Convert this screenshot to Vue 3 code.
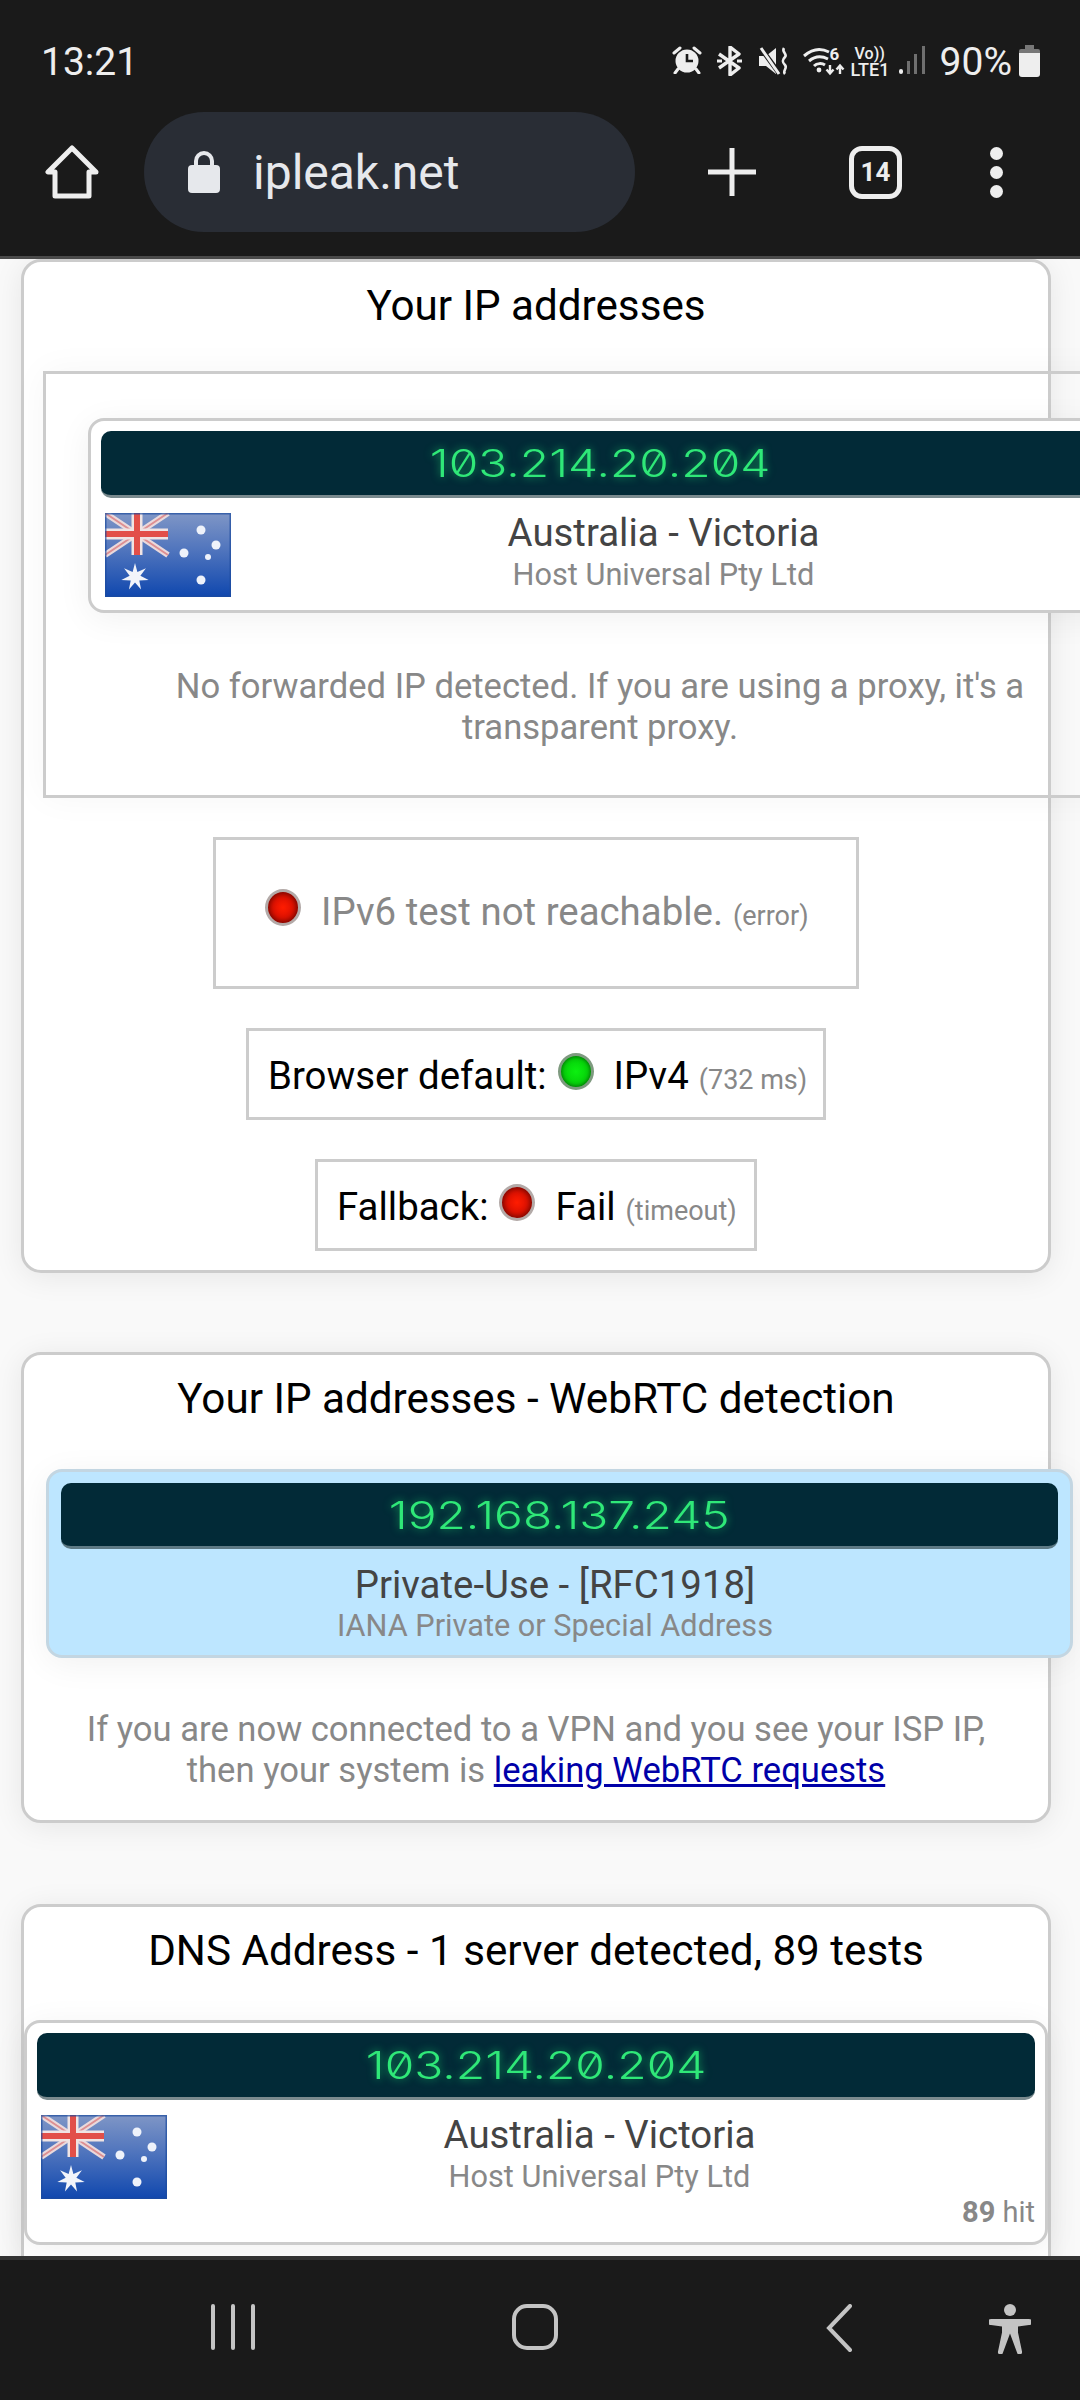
<script setup>
const statusChecks = [
  { cls: 'check-v6', label: '', dot: 'red', value: 'IPv6 test not reachable.', note: '(error)' },
  { cls: 'check-default', label: 'Browser default:', dot: 'green', value: 'IPv4', note: '(732 ms)' },
  { cls: 'check-fallback', label: 'Fallback:', dot: 'red', value: 'Fail', note: '(timeout)' }
]

// seven-pointed Commonwealth star of the flag, centred in the lower hoist
const starPoints = Array.from({ length: 14 }, (_, i) => {
  const r = i % 2 === 0 ? 14 : 5.5
  const a = (i * Math.PI) / 7 - Math.PI / 2
  return `${(30 + r * Math.cos(a)).toFixed(2)},${(64 + r * Math.sin(a)).toFixed(2)}`
}).join(' ')
</script>

<template>
  <div class="screen">
    <header class="top">
      <div class="status">
        <span class="time">13:21</span>
        <div class="status-right">
          <svg class="ic alarm" viewBox="0 0 30 28" width="30" height="28">
            <circle cx="15" cy="15" r="11.5" fill="#eee" />
            <path d="M15 8v7h6" fill="none" stroke="#1a1a1a" stroke-width="2.6" />
            <path d="M2 7l6-5M28 7l-6-5M6 23l-3 4M24 23l3 4" stroke="#eee" stroke-width="3" stroke-linecap="round" />
          </svg>
          <svg class="ic bt" viewBox="0 0 27 30" width="27" height="30">
            <path d="M3 8l20 14-9 7V1l9 7L3 22" fill="none" stroke="#eee" stroke-width="3.4" stroke-linejoin="round" />
            <path d="M1 15h5M21 15h5" stroke="#eee" stroke-width="3" />
          </svg>
          <svg class="ic mute" viewBox="0 0 31 30" width="31" height="30">
            <path d="M0 10h7l10-8v26l-10-8H0z" fill="#eee" />
            <path d="M1 1l19 26" stroke="#1a1a1a" stroke-width="5" />
            <path d="M2 2l18 26" stroke="#eee" stroke-width="3" />
            <path d="M25 2c-3 4 4 6 1 9s-3 5 0 8-3 6 0 9" fill="none" stroke="#eee" stroke-width="2.6" />
          </svg>
          <svg class="ic wifi" viewBox="0 0 44 30" width="44" height="30">
            <path d="M1 10c8-7 17-8 25-4M6 15c6-5 13-5 19-2M11 20c3-3 8-3 11-1" fill="none" stroke="#eee" stroke-width="3" />
            <circle cx="16" cy="24" r="2.4" fill="#eee" />
            <path d="M27 19v8m-3.500-3.500l3.500 4 3.500-4M37 28v-8m-3.500 3.500l3.500-4 3.500 4" fill="none" stroke="#eee" stroke-width="2.400" />
          </svg>
          <span class="six">6</span>
          <div class="volte"><span class="vo">Vo))</span><span class="lte">LTE1</span></div>
          <svg class="ic signal" viewBox="0 0 27 30" width="27" height="30">
            <rect x="0" y="23" width="4" height="5" rx="2" fill="#eee" />
            <rect x="8" y="15" width="3" height="13" fill="#6f6f6f" />
            <rect x="15" y="8" width="3" height="20" fill="#6f6f6f" />
            <rect x="23" y="0" width="3" height="28" fill="#6f6f6f" />
          </svg>
          <span class="pct">90%</span>
          <svg class="ic battery" viewBox="0 0 21 32" width="21" height="32">
            <path d="M6 0h9v4h4a2 2 0 0 1 2 2v5H0V6a2 2 0 0 1 2-2h4z" fill="#777" />
            <path d="M0 8h21v21a3 3 0 0 1-3 3H3a3 3 0 0 1-3-3z" fill="#eee" />
          </svg>
        </div>
      </div>
      <div class="toolbar">
        <svg class="home" viewBox="0 0 54 54" width="54" height="54">
          <path d="M27 3L3 27h7v24h34V27h7z" fill="none" stroke="#eee" stroke-width="5" stroke-linejoin="round" />
        </svg>
        <div class="omnibox">
          <svg class="lock" viewBox="0 0 32 42" width="32" height="42">
            <path d="M8 16V10a8 8 0 0 1 16 0v6" fill="none" stroke="#e6e8ec" stroke-width="4" />
            <rect x="0" y="14" width="32" height="28" rx="4" fill="#e6e8ec" />
          </svg>
          <span class="url">ipleak.net</span>
        </div>
        <svg class="plus" viewBox="0 0 48 48" width="48" height="48">
          <path d="M24 0v48M0 24h48" stroke="#eee" stroke-width="5" stroke-linecap="round" />
        </svg>
        <div class="tabs">14</div>
        <div class="menu"><i></i><i></i><i></i></div>
      </div>
    </header>

    <main class="page">
      <section class="card first">
        <h2 class="title">Your IP addresses</h2>
        <div class="ip-box">
          <div class="ip-card">
            <div class="ip-bar"><span class="ip">103.214.20.204</span></div>
            <div class="geo">
              <svg class="flag" viewBox="0 0 126 84" width="126" height="84">
                <defs>
                  <linearGradient id="flagBlue" x1="0" y1="0" x2="0" y2="1">
                    <stop offset="0" stop-color="#7f96c6" />
                    <stop offset="0.45" stop-color="#4f74bd" />
                    <stop offset="1" stop-color="#0f47ae" />
                  </linearGradient>
                  <filter id="soft" x="-5%" y="-5%" width="110%" height="110%">
                    <feGaussianBlur stdDeviation="0.7" />
                  </filter>
                </defs>
                <g id="auflag">
                  <rect width="126" height="84" fill="url(#flagBlue)" />
                  <g filter="url(#soft)">
                    <path d="M0 0l63 42M63 0L0 42" stroke="#e9d9dc" stroke-width="6" />
                    <path d="M0 0l63 42M63 0L0 42" stroke="#dd8f92" stroke-width="2" />
                    <path d="M32 0v42M0 21h63" stroke="#efe4e4" stroke-width="11" />
                    <path d="M32 0v42M0 21h63" stroke="#e2504a" stroke-width="6" />
                    <polygon :points="starPoints" fill="#f2f4fa" />
                    <g fill="#eef2fa">
                      <circle cx="96" cy="17" r="4.500" />
                      <circle cx="111" cy="32" r="4.500" />
                      <circle cx="79" cy="40" r="4.500" />
                      <circle cx="103" cy="44" r="3" />
                      <circle cx="96" cy="67" r="4.500" />
                    </g>
                  </g>
                  <rect x="0.750" y="0.750" width="124.500" height="82.500" fill="none" stroke="#1d4c9e" stroke-width="1.500" opacity="0.700" />
                </g>
              </svg>
              <div class="geo-text">
                <div class="place">Australia - Victoria</div>
                <div class="org">Host Universal Pty Ltd</div>
              </div>
            </div>
          </div>
          <p class="muted forward">No forwarded IP detected. If you are using a proxy, it's a<br />transparent proxy.</p>
        </div>

        <div class="checks">
          <div v-for="c in statusChecks" :key="c.cls" class="check" :class="c.cls">
            <span v-if="c.label" class="label">{{ c.label }}</span>
            <span class="dot" :class="c.dot"></span>
            <span class="value">{{ c.value }}</span>
            <span class="note">{{ c.note }}</span>
          </div>
        </div>
      </section>

      <section class="card webrtc">
        <h2 class="title">Your IP addresses - WebRTC detection</h2>
        <div class="ip-card private">
          <div class="ip-bar"><span class="ip">192.168.137.245</span></div>
          <div class="geo-text">
            <div class="place">Private-Use - [RFC1918]</div>
            <div class="org">IANA Private or Special Address</div>
          </div>
        </div>
        <p class="muted leak">If you are now connected to a VPN and you see your ISP IP,<br />then your system is <a href="#leak" class="link">leaking WebRTC requests</a></p>
      </section>

      <section class="card dns">
        <h2 class="title">DNS Address - 1 server detected, 89 tests</h2>
        <div class="ip-card dns-card">
          <div class="ip-bar"><span class="ip">103.214.20.204</span></div>
          <div class="geo">
            <svg class="flag" viewBox="0 0 126 84" width="126" height="84"><use href="#auflag" /></svg>
            <div class="geo-text">
              <div class="place">Australia - Victoria</div>
              <div class="org">Host Universal Pty Ltd</div>
            </div>
          </div>
          <div class="hits"><b>89</b> hit</div>
        </div>
      </section>
    </main>

    <footer class="nav">
      <svg class="recents" viewBox="0 0 46 46" width="46" height="46">
        <path d="M3 2v42M23 2v42M43 2v42" stroke="#c4c4c4" stroke-width="4" stroke-linecap="round" />
      </svg>
      <div class="nav-home"></div>
      <svg class="back" viewBox="0 0 26 48" width="26" height="48">
        <path d="M24 2L3 24l21 22" fill="none" stroke="#c4c4c4" stroke-width="4" stroke-linecap="round" />
      </svg>
      <svg class="a11y" viewBox="0 0 42 50" width="42" height="50">
        <circle cx="21" cy="6" r="6" fill="#c4c4c4" />
        <path d="M2 15h38a2.500 2.500 0 0 1 0 6l-11 1.500v6l4 19a2.500 2.500 0 0 1-5 1l-7-19-7 19a2.500 2.500 0 0 1-5-1l4-19v-6L2 21a2.500 2.500 0 0 1 0-6z" fill="#c4c4c4" />
      </svg>
    </footer>
  </div>
</template>

<style>
html, body { margin: 0; background: #1a1a1a; }
</style>

<style scoped>
.screen {
  width: 1080px;
  height: 2400px;
  display: flex;
  flex-direction: column;
  overflow: hidden;
  font-family: Roboto, "Liberation Sans", sans-serif;
  background: #1a1a1a;
}
.top { height: 259px; box-sizing: border-box; flex: none; background: #1a1a1a; border-bottom: 3px solid #4a4a4a; }
.status { height: 112px; display: flex; justify-content: space-between; padding: 0 40px 0 41px; box-sizing: border-box; }
.time { font-size: 39px; line-height: 124px; color: #eee; }
.status-right { display: flex; align-items: flex-start; padding-top: 46px; }
.ic { display: block; flex: none; }
.bt { margin-left: 14px; }
.mute { margin-left: 16px; }
.wifi { margin-left: 13px; }
.six { font-size: 17px; line-height: 16px; font-weight: 700; color: #eee; margin-left: -17px; width: 14px; flex: none; }
.volte { display: flex; flex-direction: column; align-items: flex-start; margin-left: 7px; width: 42px; color: #eee; font-weight: 500; line-height: 16px; flex: none; }
.vo { font-size: 16px; padding-left: 4px; }
.lte { font-size: 18px; line-height: 15px; }
.signal { margin-left: 6px; }
.pct { font-size: 39px; line-height: 32px; color: #eee; margin-left: 14px; }
.battery { margin-left: 7px; margin-top: -1px; }

.toolbar { height: 144px; display: flex; align-items: center; }
.home { margin-left: 45px; margin-top: -24px; flex: none; }
.omnibox {
  margin-left: 45px; margin-top: -24px; width: 491px; height: 120px; border-radius: 60px; background: #292d35;
  display: flex; align-items: center; flex: none;
}
.lock { margin-left: 44px; flex: none; }
.url { margin-left: 33px; font-size: 48px; color: #e6e8ec; }
.plus { margin-left: 73px; margin-top: -24px; flex: none; }
.tabs {
  margin-left: 93px; margin-top: -24px; width: 53px; height: 53px; box-sizing: border-box; border: 5px solid #eee; border-radius: 13px;
  color: #eee; font-size: 26px; font-weight: 700; display: flex; align-items: center; justify-content: center; flex: none;
}
.menu { margin-left: 88px; margin-top: -24px; display: flex; flex-direction: column; gap: 6px; flex: none; }
.menu i { display: block; width: 13px; height: 13px; border-radius: 50%; background: #eee; }

.page { flex: 1; min-height: 0; overflow: hidden; background: #f9f9f9; padding-left: 21px; }
.card {
  width: 1030px;
  box-sizing: border-box;
  background: #fff;
  border: 3px solid #ccc;
  border-radius: 20px;
  box-shadow: 0 4px 30px rgba(0, 0, 0, 0.08);
}
.first { height: 1014px; }
.webrtc { margin-top: 79px; height: 471px; }
.dns { margin-top: 81px; height: 500px; }
.title { margin: 0 0 -3px; font-size: 42.2px; font-weight: 400; line-height: 87px; color: #000; text-align: center; }

.ip-box {
  margin: 25px 0 0 19px;
  width: 1114px;
  height: 427px;
  box-sizing: border-box;
  border: 3px solid #ccc;
  padding: 44px 42px 0;
  box-shadow: 0 0 34px rgba(0, 0, 0, 0.04);
}
.ip-card {
  width: 1024px;
  box-sizing: border-box;
  border: 3px solid #ccc;
  border-radius: 16px;
  background: #fff;
  padding: 10px;
  box-shadow: 0 6px 34px rgba(0, 0, 0, 0.06);
}
.ip-box .ip-card { height: 195px; }
.ip-bar {
  height: 67px;
  box-sizing: border-box;
  background: #022a37;
  border-radius: 10px;
  border-bottom: 3px solid #7a8a8e;
  display: flex;
  align-items: center;
  justify-content: center;
}
.ip {
  font-family: Inter, "DejaVu Sans Mono", monospace;
  font-weight: 300;
  font-size: 38px;
  font-feature-settings: "zero" 1;
  color: #2fe878;
  text-shadow: 0 0 8px rgba(30, 220, 110, 0.65);
  transform: scaleX(1.26);
}
.geo { display: flex; }
.flag { display: block; flex: none; margin: 15px 0 0 4px; }
.geo-text { flex: 1; text-align: center; padding: 14px 3px 0 0; }
.place { font-size: 38.4px; line-height: 42px; color: #444; }
.org { font-size: 30.7px; line-height: 41px; color: #888; }
.muted { color: #888; font-size: 34.6px; line-height: 41px; text-align: center; margin: 0; }
.forward { margin-top: 53px; }

.checks { display: flex; flex-direction: column; align-items: center; margin-top: 39px; }
.check {
  box-sizing: border-box;
  border: 3px solid #ccc;
  display: flex;
  align-items: baseline;
  white-space: nowrap;
  color: #000;
  font-size: 38.4px;
}
.check-v6 { width: 646px; height: 152px; padding: 49px 0 0 49px; color: #888; }
.check-default { width: 580px; height: 92px; padding: 22px 0 0 19px; margin-top: 39px; }
.check-fallback { width: 442px; height: 92px; padding: 22px 0 0 19px; margin-top: 39px; }
.dot {
  width: 36px; height: 37px; box-sizing: border-box; border-radius: 50%; border: 3px solid #b3aaa8; flex: none;
  align-self: flex-start; margin: 0 20px 0 11px; box-shadow: inset 0 0 6px rgba(70, 0, 0, 0.85);
}
.check-v6 .dot { margin-left: 0; }
.dot.red { background: radial-gradient(circle, #ff1c00 0%, #e01200 45%, #a00a00 100%); }
.dot.green { background: radial-gradient(circle, #0cf010 0%, #06d40a 55%, #068a10 100%); border-color: #7f9a80; box-shadow: inset 0 0 5px rgba(0, 60, 0, 0.7); }
.note { font-size: 27px; color: #888; margin-left: 10px; }

.private { margin: 30px 0 0 22px; width: 1027px; height: 189px; background: #bde6ff; border-color: #c3d6e2; padding: 11px 12px 0; }
.private .ip-bar { height: 66px; border-bottom-color: #5e7a85; }
.private .geo-text { padding: 15px 9px 0 0; }
.private .org { line-height: 40px; }
.leak { margin-top: 51px; }
.link { color: #0000a8; text-decoration: underline; }
.dns-card { margin-top: 29px; height: 225px; position: relative; }
.hits { position: absolute; right: 10px; bottom: 12px; font-size: 29px; color: #888; line-height: 36px; }

.nav {
  height: 144px; flex: none; background: #1a1a1a; border-top: 4px solid #333;
  display: flex; align-items: flex-start; padding-top: 44px; box-sizing: border-box;
}
.recents { margin-left: 210px; flex: none; }
.nav-home { margin-left: 256px; width: 46px; height: 46px; box-sizing: border-box; border: 4px solid #c4c4c4; border-radius: 15px; flex: none; }
.back { margin-left: 268px; flex: none; }
.a11y { margin-left: 137px; flex: none; }
</style>
